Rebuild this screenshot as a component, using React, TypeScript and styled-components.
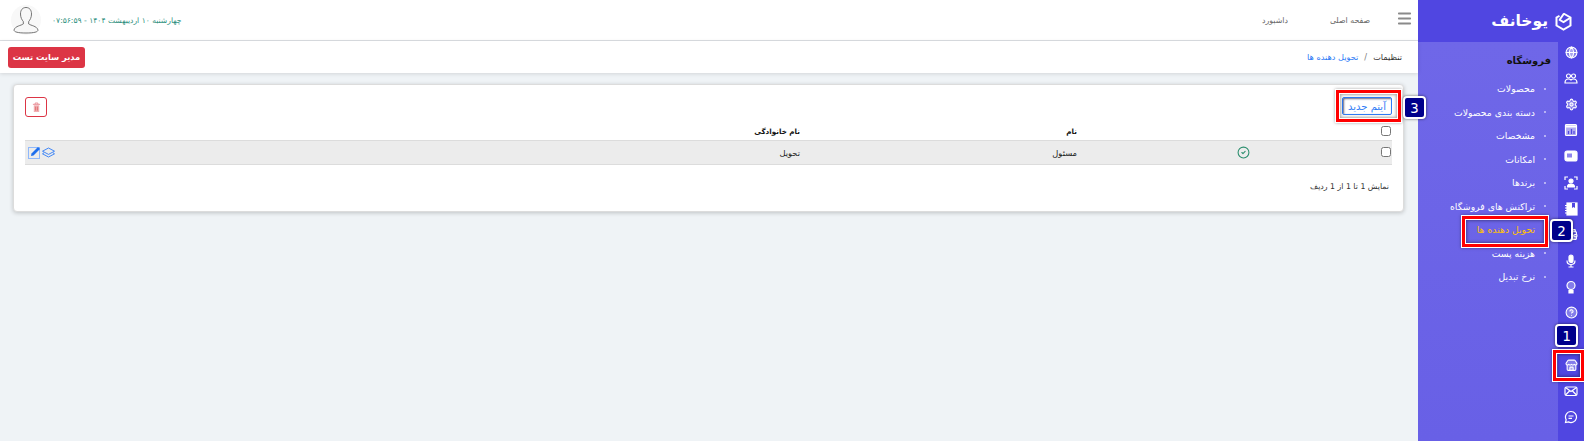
import type { ReactNode } from 'react';
import styled, { createGlobalStyle } from 'styled-components';
import { CircleCheck, CircleHelp, Globe, LayoutGrid, Menu, Settings, Store, Wallet } from 'lucide-react';

const GlobalStyle = createGlobalStyle`
  html, body { margin: 0; padding: 0; height: 100%; background: #eff3f6; }
  body { font-family: "DejaVu Sans", "Noto Sans", sans-serif; font-size: 9px; overflow: hidden; }
  * { box-sizing: border-box; }
`;

const Page = styled.div`
  position: relative;
  display: flex;
  width: 1584px;
  height: 441px;
  overflow: hidden;
  direction: rtl;
`;

const Sidebar = styled.aside`
  width: 166px;
  flex: none;
  display: flex;
  flex-direction: column;
  background: #5046e1;
`;

const Brand = styled.div`
  height: 42px;
  flex: none;
  display: flex;
  align-items: center;
  gap: 7px;
  padding-right: 12px;
  color: #fff;
`;

const BrandName = styled.span`
  font-size: 15.5px;
  font-weight: 700;
`;

const SideBody = styled.div`
  flex: 1;
  display: flex;
  min-height: 0;
`;

const Rail = styled.nav`
  width: 26px;
  flex: none;
  display: flex;
  flex-direction: column;
  align-items: center;
  margin-top: -3px;
  color: #fff;
`;

const RailIcon = styled.span`
  height: 26.1px;
  flex: none;
  display: flex;
  align-items: center;
  justify-content: center;
  svg { fill: rgba(255, 255, 255, 0.3); }
`;

const SubMenu = styled.div`
  flex: 1;
  padding: 11px 7px 0 0;
  background: linear-gradient(180deg, #6f67e8 0%, #6860e6 100%);
`;

const SubTitle = styled.div`
  height: 15px;
  line-height: 15px;
  font-size: 10px;
  font-weight: 700;
  color: #111;
  margin-bottom: 9px;
`;

const SubItem = styled.div<{ $active?: boolean }>`
  height: 23.5px;
  display: flex;
  align-items: center;
  gap: 9px;
  padding-right: 5px;
  font-size: 9.3px;
  white-space: nowrap;
  color: ${(p) => (p.$active ? '#ffc107' : '#fff')};
`;

const Dot = styled.i`
  width: 2px;
  height: 2px;
  border-radius: 50%;
  background: #cfcbf8;
`;

const Main = styled.main`
  flex: 1;
  min-width: 0;
  display: flex;
  flex-direction: column;
`;

const TopBar = styled.header`
  height: 41px;
  flex: none;
  display: flex;
  align-items: center;
  padding: 0 5px 0 11px;
  background: #fff;
  border-bottom: 1px solid #dcdfe3;
  color: #666;
`;

const MenuToggle = styled.span`
  display: flex;
  margin-bottom: 4px;
  color: #8a8a8a;
`;

const NavLink = styled.span<{ $gap: number }>`
  margin-right: ${(p) => p.$gap}px;
  font-size: 7.8px;
`;

const DateText = styled.span`
  margin-right: auto;
  margin-left: 11px;
  font-size: 7.6px;
  color: #2d8f7d;
`;

const Avatar = styled.div`
  width: 30px;
  height: 30px;
  display: flex;
  align-items: center;
  justify-content: center;
  border-radius: 50%;
  background: #f8f8f8;
`;

const Crumbs = styled.div`
  height: 32px;
  flex: none;
  display: flex;
  align-items: center;
  padding: 0 16px 0 8px;
  background: #fff;
  box-shadow: 0 1px 4px rgba(0, 0, 0, 0.12);
  color: #333;
  font-size: 8.2px;
`;

const CrumbSep = styled.span`
  margin: 0 6px;
  color: #777;
`;

const CrumbLink = styled.span`
  color: #2f7cf6;
`;

const OwnerButton = styled.button`
  margin-right: auto;
  width: 77px;
  height: 21px;
  padding: 0;
  border: none;
  border-radius: 3px;
  background: #dc3545;
  color: #fff;
  white-space: nowrap;
  font: 700 8.3px "DejaVu Sans", sans-serif;
`;

const Card = styled.section`
  height: 128px;
  margin: 11px 14px 0 13px;
  padding: 12px 11px 0 11px;
  background: #fff;
  border: 1px solid #dcdcdc;
  border-radius: 4px;
  box-shadow: 0 1px 4px rgba(0, 0, 0, 0.2);
`;

const CardTools = styled.div`
  height: 26px;
  display: flex;
  justify-content: space-between;
  align-items: flex-start;
`;

const NewButton = styled.button`
  width: 50px;
  height: 18px;
  padding: 0;
  background: #fff;
  border: 1px solid #2f7cf6;
  border-radius: 2px;
  color: #2f7cf6;
  box-shadow: inset 1px 1px 2px rgba(0, 0, 50, 0.6);
  font: 10px "DejaVu Sans", sans-serif;
`;

const DeleteButton = styled.button`
  width: 22px;
  height: 20px;
  padding: 0;
  display: flex;
  align-items: center;
  justify-content: center;
  background: #fff;
  border: 1px solid #dc3545;
  border-radius: 3px;
`;

const Grid = styled.div`
  display: grid;
  grid-template-columns: 135px 180px 277px 1fr 40px;
  align-items: center;
`;

const HeadRow = styled(Grid)`
  height: 18px;
  font-weight: 700;
  font-size: 7.2px;
  color: #111;
  border-bottom: 1px solid #dcdcdc;
`;

const BodyRow = styled(Grid)`
  height: 24px;
  font-size: 8.3px;
  color: #222;
  background: #ececec;
  border-bottom: 1px solid #dcdcdc;
`;

const Check = styled.input.attrs({ type: 'checkbox' })`
  width: 10px;
  height: 10px;
  margin: 0 1px 2px 0;
`;

const StatusCell = styled.div`
  display: flex;
  padding-right: 7px;
  margin-bottom: 1px;
  color: #2d8f6f;
`;

const Actions = styled.div`
  display: flex;
  align-items: center;
  justify-content: flex-end;
  gap: 1px;
  padding-left: 3px;
`;

const Summary = styled.div`
  margin-top: 17px;
  padding-right: 3px;
  font-size: 7.8px;
  color: #333;
`;

const Highlight = styled.div<{ $x: number; $y: number; $w: number; $h: number }>`
  position: absolute;
  left: ${(p) => p.$x}px;
  top: ${(p) => p.$y}px;
  width: ${(p) => p.$w}px;
  height: ${(p) => p.$h}px;
  border: 3px solid #f00;
  outline: 1px solid #fff;
  box-shadow: 0 0 3px 1px rgba(0, 0, 0, 0.35), inset 0 0 0 1px #fff, inset 0 0 3px 2px rgba(0, 0, 0, 0.35);
`;

const StepBadge = styled.div<{ $x: number; $y: number }>`
  position: absolute;
  left: ${(p) => p.$x}px;
  top: ${(p) => p.$y}px;
  width: 23px;
  height: 23px;
  display: flex;
  align-items: center;
  justify-content: center;
  background: #00008b;
  border: 2px solid #fff;
  border-radius: 4px;
  color: #fff;
  font: 14px "DejaVu Sans Mono", monospace;
  box-shadow: 0 0 3px rgba(0, 0, 0, 0.6);
`;

function Glyph({ children }: { children: ReactNode }) {
  return (
    <svg width="14" height="14" viewBox="0 0 14 14" style={{ fill: 'none' }} stroke="#fff" strokeWidth="1.2">
      {children}
    </svg>
  );
}

const railIcons: ReactNode[] = [
  <Globe size={13} />,
  <Glyph>
    <circle cx="4.5" cy="5" r="2" />
    <circle cx="9.5" cy="5" r="2" />
    <path d="M1 12c0-3 2-4 3.5-4S7 9 7 9s1-1 2.5-1S13 9 13 12z" />
  </Glyph>,
  <Settings size={13} />,
  <Glyph>
    <rect x="1.5" y="1.5" width="11" height="11" rx="1" fill="rgba(255,255,255,.55)" />
    <path d="M2 3.5h10" strokeWidth="2" />
    <path d="M4.5 11V8M7.5 11V6M10 11V8" stroke="#5046e1" />
  </Glyph>,
  <Glyph>
    <rect x="1" y="2" width="12" height="10" rx="2" fill="#fff" />
    <rect x="3" y="4.500" width="5" height="4" fill="#8d86ee" stroke="none" />
  </Glyph>,
  <Glyph>
    <path d="M1 4V1h3M10 1h3v3M1 10v3h3M10 13h3v-3" />
    <circle cx="7" cy="5" r="2" fill="#fff" />
    <path d="M3.5 11c0-2.5 1.5-3 3.5-3s3.5.5 3.5 3z" fill="#fff" />
  </Glyph>,
  <Glyph>
    <rect x="3" y="1" width="10" height="12" fill="#fff" />
    <path d="M1 3.5h3M1 6h3M1 8.5h3M1 11h3" />
    <path d="M8 1h3v5l-1.500-1L8 6z" fill="#5046e1" stroke="none" />
  </Glyph>,
  <Wallet size={13} />,
  <Glyph>
    <rect x="5" y="1" width="4" height="7.500" rx="2" fill="#fff" />
    <path d="M3 6.500c0 3 2 4 4 4s4-1 4-4M7 10.500V13M4.500 13h5" />
  </Glyph>,
  <Glyph>
    <circle cx="7" cy="5.500" r="4" fill="rgba(255,255,255,.3)" />
    <path d="M5 10.500h4V13H5z" fill="#fff" />
  </Glyph>,
  <CircleHelp size={13} />,
  <LayoutGrid size={13} />,
  <Store size={13} />,
  <Glyph>
    <rect x="1" y="3" width="12" height="8.500" rx="1.500" />
    <path d="M1.500 3.500 7 7.500l5.500-4M1.500 11 5.500 7M12.500 11l-4-4" />
  </Glyph>,
  <Glyph>
    <path d="M7 1.500a5.500 5.500 0 1 1-2.500 10.400L1.500 12.500l.7-2.800A5.500 5.500 0 0 1 7 1.500z" />
    <path d="M4.500 6h5M4.500 8.300h3.500" />
  </Glyph>,
];

const menuItems = [
  'محصولات', 'دسته بندی محصولات', 'مشخصات', 'امکانات', 'برندها',
  'تراکنش های فروشگاه', 'تحویل دهنده ها', 'هزینه پست', 'نرخ تبدیل',
];

function LogoMark() {
  return (
    <svg width="17" height="19" viewBox="0 0 17 19" fill="none" stroke="#fff" strokeWidth="2">
      <path d="M8.500 1.500 15.500 5.500v8l-7 4-7-4v-8l3-1.700" />
      <path d="M4 7.500l4.500 2.500L15 6M9 1.500 4.500 8" />
    </svg>
  );
}

function UserFigure() {
  return (
    <svg width="30" height="30" viewBox="0 0 30 30" fill="none" stroke="#666" strokeWidth="0.9">
      <path d="M15 2.500c-3.500 0-5.500 2.500-5.500 6.500 0 3.500 1.500 6 2.800 7.500v2.500c-2 1.500-8.300 2-9.300 6 0 2 4 3 12 3s12-1 12-3c-1-4-7.300-4.500-9.300-6v-2.500c1.300-1.500 2.800-4 2.800-7.500 0-4-2-6.500-5.500-6.500z" />
    </svg>
  );
}

function TrashGlyph() {
  return (
    <svg width="9" height="11" viewBox="0 0 10 12">
      <path d="M1 2.500h8M3.500 2.500V1h3v1.500" stroke="#e88a92" fill="none" />
      <path d="M2 3.500h6V11H2z" fill="#f0b0b4" />
      <path d="M4 5v4.500M6 5v4.500" stroke="#d9534f" strokeWidth="0.7" />
    </svg>
  );
}

function EditGlyph() {
  return (
    <svg width="13" height="13" viewBox="0 0 13 13" fill="none">
      <rect x="0.500" y="1.500" width="11" height="11" stroke="#8fb8fb" strokeWidth="1" />
      <path d="M3 10l.5-2.500L10 1l2 2-6.500 6.500z" fill="#1f6fec" />
    </svg>
  );
}

function LayersGlyph() {
  return (
    <svg width="13" height="12" viewBox="0 0 13 12" fill="none" stroke="#2f7cf6" strokeWidth="0.9">
      <path d="M6.500 1 12.500 4.200 6.500 7.400.5 4.200z" />
      <path d="M2 5.800.5 6.800 6.500 10l6-3.200-1.500-1" />
    </svg>
  );
}

export default function App() {
  return (
    <Page>
      <GlobalStyle />
      <Sidebar>
        <Brand>
          <LogoMark />
          <BrandName>یوخانف</BrandName>
        </Brand>
        <SideBody>
          <Rail>
            {railIcons.map((icon, i) => (
              <RailIcon key={i}>{icon}</RailIcon>
            ))}
          </Rail>
          <SubMenu>
            <SubTitle>فروشگاه</SubTitle>
            {menuItems.map((item) => (
              <SubItem key={item} $active={item === 'تحویل دهنده ها'}>
                <Dot />
                {item}
              </SubItem>
            ))}
          </SubMenu>
        </SideBody>
      </Sidebar>

      <Main>
        <TopBar>
          <MenuToggle>
            <Menu size={17} strokeWidth={2.6} />
          </MenuToggle>
          <NavLink $gap={26}>صفحه اصلی</NavLink>
          <NavLink $gap={42}>داشبورد</NavLink>
          <DateText>چهارشنبه ۱۰ اردیبهشت ۱۴۰۴ - ۰۷:۵۶:۵۹</DateText>
          <Avatar>
            <UserFigure />
          </Avatar>
        </TopBar>
        <Crumbs>
          تنظیمات
          <CrumbSep>/</CrumbSep>
          <CrumbLink>تحویل دهنده ها</CrumbLink>
          <OwnerButton>مدیر سایت تست</OwnerButton>
        </Crumbs>
        <Card>
          <CardTools>
            <NewButton>آیتم جدید</NewButton>
            <DeleteButton>
              <TrashGlyph />
            </DeleteButton>
          </CardTools>
          <HeadRow>
            <Check />
            <span />
            <span>نام</span>
            <span>نام خانوادگی</span>
            <span />
          </HeadRow>
          <BodyRow>
            <Check />
            <StatusCell>
              <CircleCheck size={13} />
            </StatusCell>
            <span>مسئول</span>
            <span>تحویل</span>
            <Actions>
              <LayersGlyph />
              <EditGlyph />
            </Actions>
          </BodyRow>
          <Summary>نمایش 1 تا 1 از 1 ردیف</Summary>
        </Card>
      </Main>

      <Highlight $x={1553} $y={350} $w={31} $h={31} />
      <StepBadge $x={1555} $y={324}>1</StepBadge>
      <Highlight $x={1462} $y={216} $w={86} $h={31} />
      <StepBadge $x={1550} $y={219}>2</StepBadge>
      <Highlight $x={1336} $y={90} $w={65} $h={32} />
      <StepBadge $x={1403} $y={96}>3</StepBadge>
    </Page>
  );
}
